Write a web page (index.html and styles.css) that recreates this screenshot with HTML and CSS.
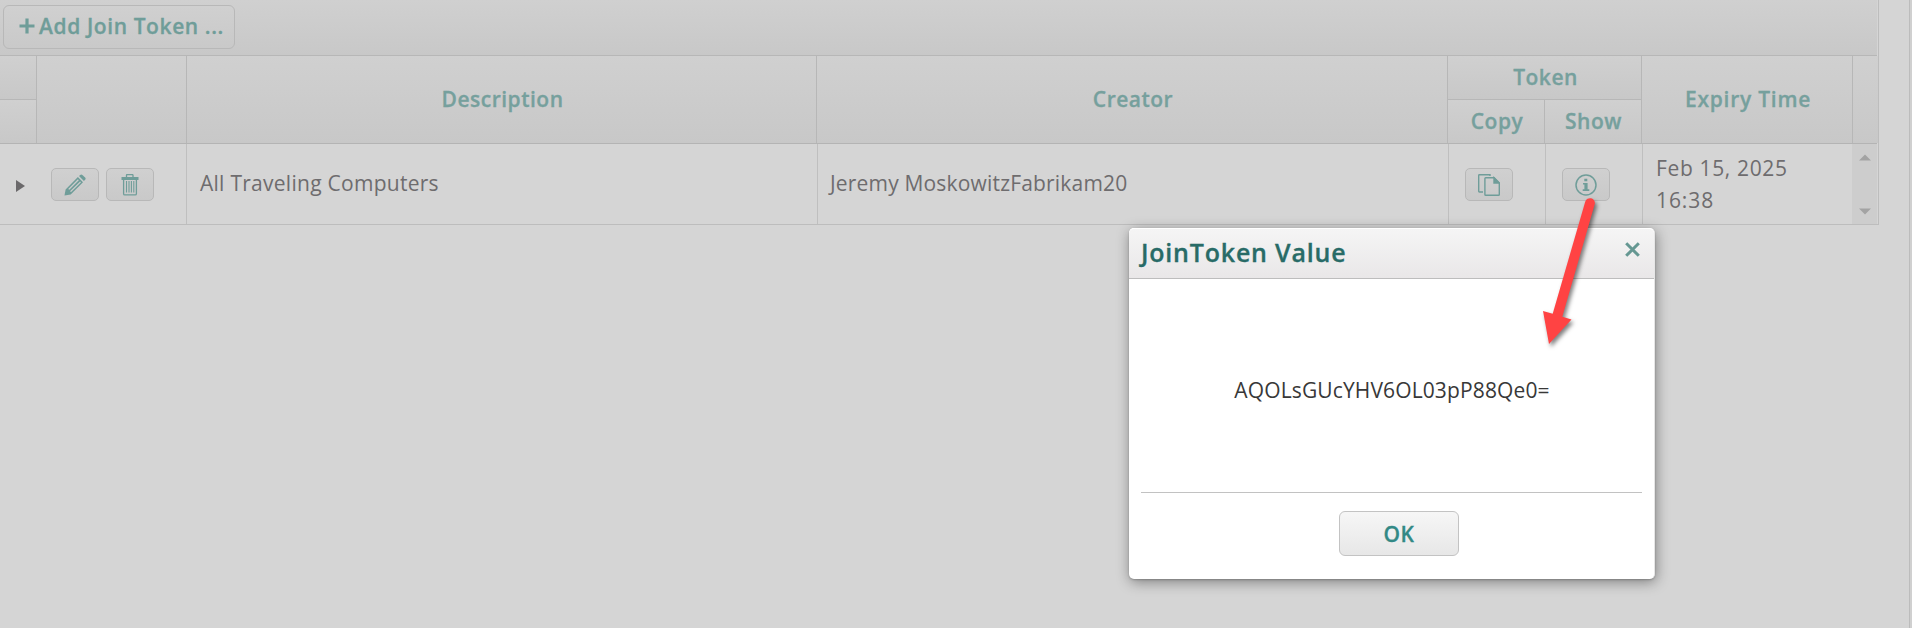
FILE: index.html
```html
<!DOCTYPE html>
<html lang="en">
<head>
<meta charset="utf-8">
<title>Join Tokens</title>
<link rel="stylesheet" href="styles.css">
</head>
<body>
<main class="page">
  <section class="panel">
    <div class="toolbar">
      <button class="btn add">
        <svg width="16" height="16" viewBox="0 0 16 16"><path d="M8 .5v15M.5 8h15" stroke="currentColor" stroke-width="3.2"/></svg><span>Add Join Token ...</span>
      </button>
    </div>
    <div class="head">
      <div class="split"><div class="cell top"></div><div class="cell"></div></div>
      <div class="cell"></div>
      <div class="cell">Description</div>
      <div class="cell">Creator</div>
      <div class="group">
        <div class="cell token">Token</div>
        <div class="cell">Copy</div>
        <div class="cell show">Show</div>
      </div>
      <div class="cell expiry">Expiry Time</div>
      <div class="cell last"></div>
    </div>
    <div class="row">
      <div class="actions">
        <svg class="expand" width="9" height="12" viewBox="0 0 9 12"><path d="M0 0 9 6 0 12Z" fill="#6b696b"/></svg>
        <button class="btn icon">
          <svg width="22" height="22" viewBox="0 0 22 22" fill="currentColor"><path fill-rule="evenodd" d="M.5 21.5 1.6 15.4 13.9 3.1 19 8.2 6.7 20.5ZM4.2 15.1 5.3 15.7 14.8 6.2 13.9 5.3ZM6 17.2 7.1 18 17 8.3 16.1 7.4Z"/><path d="M15 2.1 16.2.9Q17.3-.1 18.4.9L21.1 3.6Q22.1 4.7 21.1 5.8L19.9 7Z"/></svg>
        </button>
        <button class="btn icon">
          <svg width="18" height="22" viewBox="0 0 18 22" fill="none" stroke="currentColor"><path d="M.5 4.5h17" stroke-width="3"/><path d="M5.5 3V1.2Q5.5.6 6.1.6h5.3q.6 0 .6.6V3M2.6 6v13.7q0 1.2 1.2 1.2h10.4q1.2 0 1.2-1.2V6" stroke-width="1.3"/><path d="M5.5 7v11.6M8 7v11.6M10.4 7v11.6M12.8 7v11.6" stroke-width="1.1"/></svg>
        </button>
      </div>
      <div class="text">All Traveling Computers</div>
      <div class="text creator">Jeremy MoskowitzFabrikam20</div>
      <div class="tool">
        <button class="btn icon">
          <svg width="22" height="22" viewBox="0 0 22 22" fill="none" stroke="currentColor" stroke-width="1.4"><path d="M5 18H1.4Q.7 18 .7 17.3V1.4Q.7.7 1.4.7H12V2"/><path d="M7.7 3.7H16l5.3 5.3v11.5q0 .8-.8.8H7.7q-.8 0-.8-.8v-16q0-.8.8-.8Z"/><path d="M16 3.7V9h5.3Z" fill="currentColor"/></svg>
        </button>
      </div>
      <div class="tool">
        <button class="btn icon">
          <svg width="22" height="22" viewBox="0 0 22 22"><circle cx="11" cy="11" r="10" fill="none" stroke="currentColor" stroke-width="1.5"/><path fill="currentColor" d="M9.3 4.7h3v2.5h-3zM8 9h4.6v6.2h1.7v1.8H7.7v-1.8h1.7v-4.6H8z"/></svg>
        </button>
      </div>
      <div class="text date"><span class="day">Feb 15, 2025</span><span class="time">16:38</span></div>
      <div class="scroll">
        <svg width="12" height="7" viewBox="0 0 12 7"><path d="M0 6.5 6 .5 12 6.5Z" fill="#a3a3a3"/></svg>
        <svg width="12" height="7" viewBox="0 0 12 7"><path d="M0 .5h12L6 6.5Z" fill="#a3a3a3"/></svg>
      </div>
    </div>
  </section>
  <div class="gutter"></div>

  <div class="dialog" role="dialog">
    <header class="dialog-head">
      <h2>JoinToken Value</h2>
      <svg class="close" width="15" height="15" viewBox="0 0 15 15"><path d="M1.2 1.2l12.6 12.6M13.8 1.2l-12.6 12.6" stroke="#659792" stroke-width="3"/></svg>
    </header>
    <div class="dialog-body">AQOLsGUcYHV6OL03pP88Qe0=</div>
    <footer class="dialog-foot"><button class="btn ok">OK</button></footer>
  </div>

  <svg class="arrow" width="70" height="170" viewBox="0 0 70 170"><path d="M45.2 11.8A4.9 4.9 0 0 1 54.7 14.3L22.3 126.8 31.5 129.4 9 154 3 121 12.7 123.7Z" fill="#ff4343"/></svg>
</main>
</body>
</html>
```
FILE: styles.css
```css
* { box-sizing: border-box; }
body { margin: 0; font: 21px "Open Sans", "Noto Sans", sans-serif; }
svg { display: block; flex: none; }

.page {
  position: relative;
  display: flex;
  justify-content: space-between;
  width: 1912px;
  height: 628px;
  overflow: hidden;
  background: #d5d5d5;
}
.panel {
  width: 1879px;
  height: 225px;
  padding-right: 1px;
  border: solid #bdbdbd;
  border-width: 0 1px 1px 0;
}
.gutter { width: 3px; border-left: 1px solid #bcbcbc; background: #d0d0d0; }

.toolbar {
  height: 56px;
  padding: 5px 3px;
  border-bottom: 1px solid #b7b7b7;
  background: linear-gradient(#d0d0d0, #c8c8c8);
}
.btn {
  display: flex;
  align-items: center;
  justify-content: center;
  padding: 0;
  border: 1px solid #b8b8b8;
  border-radius: 6px;
  background: linear-gradient(#d0d0d0, #c9c9c9);
  color: #6f9d99;
  font: 600 21px "Open Sans", "Noto Sans", sans-serif;
  -webkit-text-stroke: .3px;
}
.add {
  justify-content: flex-start;
  width: 232px;
  height: 44px;
  padding: 0 0 2px 15px;
  gap: 4px;
  letter-spacing: .6px;
  white-space: nowrap;
}

.head {
  display: grid;
  grid-template-columns: 37px 150px 630px 631px 194px 211px 25px;
  height: 88px;
  border-bottom: 1px solid #b4b4b4;
  color: #76a09d;
  font-weight: 600;
  letter-spacing: .5px;
  -webkit-text-stroke: .3px;
}
.cell {
  display: flex;
  align-items: center;
  justify-content: center;
  padding: 0 0 2px 2px;
  border-right: 1px solid #b7b7b7;
  background: linear-gradient(#d0d0d0, #c8c8c8);
}
.split { display: grid; grid-template-rows: 44px 43px; }
.top, .token { border-bottom: 1px solid #b7b7b7; }
.group { display: grid; grid-template: 44px 43px / 97px 97px; }
.token { grid-column: span 2; }
.show { padding-right: 1px; }
.expiry { letter-spacing: .75px; }
.last { border-right: 0; }

.row {
  display: grid;
  grid-template-columns: 187px 631px 631px 97px 97px 209px 25px;
  height: 80px;
  color: #6e6c6e;
}
.row > div { display: flex; align-items: center; border-right: 1px solid #bfbfbf; }
.row > .actions { gap: 7px; padding: 1px 0 0 16px; }
.expand { margin: 2px 19px 0 0; }
.icon { width: 48px; height: 33px; border-radius: 5px; }
.tool { padding: 1px 0 0 16px; }
.row > .text { padding: 0 0 2px 13px; letter-spacing: .27px; white-space: nowrap; }
.row > .creator { padding-left: 12px; letter-spacing: .18px; }
.row > .date {
  flex-direction: column;
  align-items: flex-start;
  justify-content: center;
  padding: 0 0 1px 13px;
  border-right: 0;
  line-height: 32px;
}
.day { letter-spacing: .65px; }
.time { letter-spacing: .9px; }
.row > .scroll {
  flex-direction: column;
  justify-content: space-between;
  padding: 10px 0 9px;
  border-right: 0;
  background: #cdcdcd;
}

.dialog {
  position: absolute;
  left: 1129px;
  top: 228px;
  width: 526px;
  height: 351px;
  border-right: 1px solid #e6e6e6;
  border-radius: 5px;
  background: #fff;
  box-shadow: 0 1px 2px rgba(0, 0, 0, .2), 1px 3px 14px rgba(0, 0, 0, .4);
}
.dialog-head {
  display: flex;
  align-items: flex-start;
  justify-content: space-between;
  height: 51px;
  padding: 13px 14px 0 12px;
  border-top: 1px solid #fff;
  border-bottom: 1px solid #bdbdbd;
  border-radius: 5px 5px 0 0;
  background: linear-gradient(#f5f5f5, #e9e7e8);
}
h2 {
  margin: -7px 0 0;
  color: #286b67;
  font-size: 25px;
  font-weight: 600;
  line-height: 34px;
  letter-spacing: .8px;
  -webkit-text-stroke: .3px;
}
.dialog-body {
  display: flex;
  align-items: center;
  justify-content: center;
  height: 214px;
  margin: 0 12px;
  padding: 9px 0 0 1px;
  border-bottom: 1px solid #c2c2c2;
  color: #383838;
  letter-spacing: .13px;
}
.dialog-foot { display: flex; justify-content: center; padding: 18px 0 0 15px; }
.ok {
  width: 120px;
  height: 45px;
  border-color: #c3c3c3;
  background: linear-gradient(#f6f6f6, #e7e7e7);
  color: #328985;
  letter-spacing: .6px;
}

.arrow {
  position: absolute;
  left: 1540px;
  top: 190px;
  filter: drop-shadow(2px 3px 2px rgba(0, 0, 0, .5));
}
```
